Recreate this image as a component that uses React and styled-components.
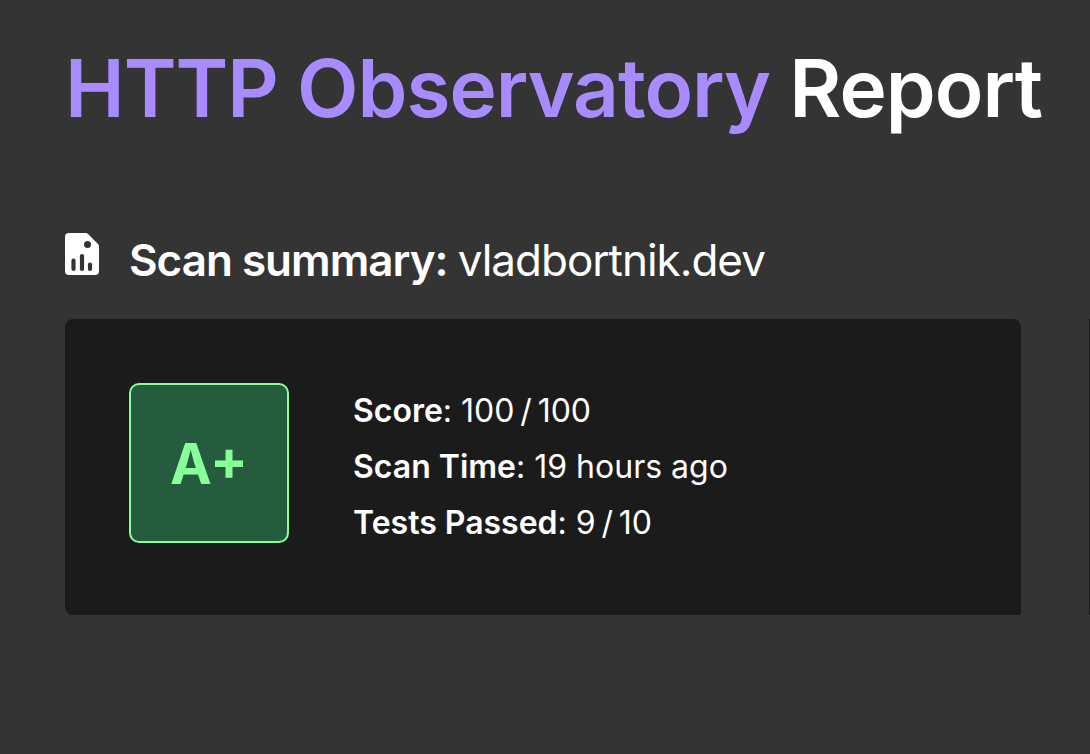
import React from "react";
import styled, { createGlobalStyle } from "styled-components";

const GlobalStyle = createGlobalStyle`
  * { box-sizing: border-box; }
  body {
    margin: 0;
    background: #343434;
    color: #fff;
    font-family: Inter, "Liberation Sans", sans-serif;
  }
`;

const Page = styled.main`
  min-height: 100vh;
  padding: 40px 0 64px 65px;
  overflow: hidden;
`;

const Title = styled.h1`
  margin: 0;
  font-size: 80px;
  line-height: 96px;
  font-weight: 600;
  letter-spacing: -1px;
  white-space: nowrap;
`;

const Accent = styled.span`
  color: #a78bff;
`;

const Summary = styled.section`
  margin-top: 88px;
`;

const SummaryHeading = styled.h2`
  display: flex;
  align-items: center;
  gap: 30px;
  margin: 0 0 23px;
  font-size: 44px;
  line-height: 72px;
  font-weight: 600;
  letter-spacing: -1px;
`;

const ReportIcon = styled.svg`
  flex: none;
  width: 34px;
  height: 42px;
  margin-bottom: 12px;
`;

const Host = styled.span`
  font-weight: 400;
`;

const Columns = styled.div`
  display: flex;
  gap: 68px;
`;

const Card = styled.div`
  display: flex;
  flex: 1;
  align-items: flex-start;
  gap: 64px;
  padding: 64px;
  border-radius: 8px 8px 2px 8px;
  background: #1b1b1b;
`;

const NextCardEdge = styled.div`
  flex: none;
  width: 1px;
  background: #1b1b1b;
`;

const Grade = styled.div`
  display: flex;
  flex: none;
  align-items: center;
  justify-content: center;
  width: 160px;
  height: 160px;
  padding-top: 2px;
  border: 2px solid #88ff99;
  border-radius: 10px;
  background: #265c3e;
  color: #88ff99;
  font-size: 56px;
  font-weight: 700;
`;

const Facts = styled.dl`
  margin: 0;
  font-size: 32px;
  line-height: 56px;
`;

const Fact = styled.div`
  display: flex;
  gap: 9px;
`;

const Label = styled.dt`
  &::after { content: ":"; }
`;

const Name = styled.span`
  font-weight: 600;
`;

const Value = styled.dd`
  margin: 0;
`;

const facts = [
  ["Score", "100\u2009/\u2009100"],
  ["Scan Time", "19 hours ago"],
  ["Tests Passed", "9\u2009/\u200910"],
];

export default function App() {
  return (
    <>
      <GlobalStyle />
      <Page>
        <Title><Accent>HTTP Observatory</Accent> Report</Title>
        <Summary>
          <SummaryHeading>
            <ReportIcon viewBox="0 0 34 42" aria-hidden="true">
              <path fill="#fff" d="M4 0H20.5Q22 0 23 1L33 11Q34 12 34 13.500V38Q34 42 30 42H4Q0 42 0 38V4Q0 0 4 0Z" />
              <circle cx="22.500" cy="11.500" r="3.500" fill="#343434" />
              <path d="M8.500 36V27.500M17 36V23M25 36V31.500" stroke="#343434" strokeWidth="4.200" strokeLinecap="round" />
            </ReportIcon>
            <span>Scan summary: <Host>vladbortnik.dev</Host></span>
          </SummaryHeading>
          <Columns>
            <Card>
              <Grade>A+</Grade>
              <Facts>
                {facts.map(([name, value]) => (
                  <Fact key={name}>
                    <Label><Name>{name}</Name></Label>
                    <Value>{value}</Value>
                  </Fact>
                ))}
              </Facts>
            </Card>
            <NextCardEdge />
          </Columns>
        </Summary>
      </Page>
    </>
  );
}
